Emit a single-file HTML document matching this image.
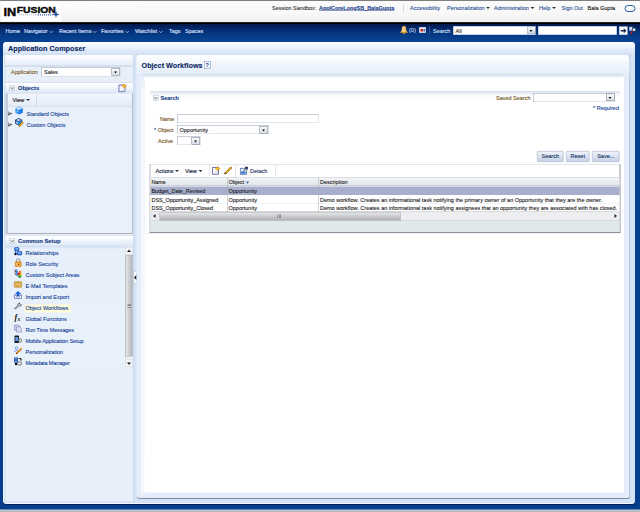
<!DOCTYPE html>
<html>
<head>
<meta charset="utf-8">
<title>Application Composer</title>
<style>
html,body{margin:0;padding:0;width:640px;height:512px;overflow:hidden;background:#053d8c;}
#root{position:absolute;left:0;top:0;width:1280px;height:1024px;transform:scale(0.5);transform-origin:0 0;
  font-family:"Liberation Sans",sans-serif;font-size:11px;color:#222;overflow:hidden;background:#053d8c;}
#root *{box-sizing:border-box;}
.a{position:absolute;white-space:nowrap;}
.t{position:absolute;white-space:nowrap;line-height:14px;height:14px;-webkit-text-stroke:0.2px currentColor;}
/* header */
#hdr{left:0;top:0;width:1280px;height:45px;background:linear-gradient(to bottom,#fbfbfb 0%,#f8f8f8 55%,#f0f0f0 100%);border-top:2px solid #7e7e7e;}
#hdrline{left:0;top:44px;width:1280px;height:4px;background:linear-gradient(to bottom,#777 0%,#000 35%,#000 75%,#02143f 100%);}
#nav{left:0;top:48px;width:1280px;height:36px;background:linear-gradient(to bottom,#02174a 0%,#042b70 30%,#063c88 65%,#094594 100%);}
.hl{color:#2a4f96;}
.nv{color:#c9ddf6;-webkit-text-stroke:0.35px #c9ddf6;}

.dd{display:inline-block;width:0;height:0;border-left:4px solid transparent;border-right:4px solid transparent;border-top:4px solid #333;vertical-align:middle;margin-left:0px;position:relative;top:-1px;}
.chev{display:inline-block;width:5px;height:5px;border-right:1.6px solid #c4dcf6;border-bottom:1.6px solid #c4dcf6;transform:scale(1.15,0.85) rotate(45deg);vertical-align:middle;margin-left:1.5px;position:relative;top:-1px;}
.selbtn{width:17px;height:15px;background:linear-gradient(to bottom,#fdfdfd,#d8dde4);border:1px solid #6f7a88;}
.selbtn:after{content:"";position:absolute;left:4px;top:6px;width:0;height:0;border-left:3.5px solid transparent;border-right:3.5px solid transparent;border-top:4px solid #111;}

#outer{left:6px;top:84px;width:1264px;height:924px;background:#d3e2f6;border-radius:7px;border-left:2px solid #f4f8fd;border-bottom:2px solid #f2f6fc;box-shadow:0 2px 1px #021f55;}
#outerhdr{left:6px;top:84px;width:1264px;height:26px;border-radius:7px 7px 0 0;background:linear-gradient(to bottom,#ffffff 0%,#eef4fc 35%,#cfe0f6 100%);}
#left{left:11px;top:110px;width:255px;height:892px;background:#e8eff9;}
.phdr{background:linear-gradient(to bottom,#ffffff 0%,#f4f8fd 40%,#d9e6f6 100%);border-top:1px solid #c5d2e4;border-bottom:1px solid #b4c2d6;}
.disc{width:11px;height:11px;border:1px solid #b4bece;background:linear-gradient(to bottom,#fff,#dfe5ee);}
.disc:after{content:"";position:absolute;left:2px;top:1px;width:4px;height:4px;border-right:1.5px solid #333;border-bottom:1.5px solid #333;transform:rotate(45deg);}
.tri{width:0;height:0;border-top:4.5px solid transparent;border-bottom:4.5px solid transparent;border-left:9px solid #444;}
.tri:after{content:"";position:absolute;left:-8px;top:-3px;width:0;height:0;border-top:2.5px solid transparent;border-bottom:2.5px solid transparent;border-left:5px solid #e9f0f9;}

#main{left:273px;top:110px;width:988px;height:888px;background:#e4edf9;border-radius:7px;border-right:2px solid #93a2b8;border-bottom:2px solid #7d8a9e;}
#mainhdr{left:273px;top:110px;width:986px;height:38px;border-radius:7px 7px 0 0;background:linear-gradient(to bottom,#ffffff 0%,#f3f7fc 40%,#e4edf9 100%);}
#inner{left:282px;top:148px;width:966px;height:837px;background:#fff;border-radius:6px 6px 0 0;}
#innertop{left:282px;top:148px;width:966px;height:9px;border-radius:6px 6px 0 0;background:linear-gradient(to bottom,#cbd8ea 0%,#e6edf7 50%,#ffffff 100%);}
.btn{height:22px;line-height:19px;text-align:center;color:#1a3568;background:linear-gradient(to bottom,#f0f4fa 0%,#dbe4f1 50%,#c3d0e4 100%);border:1px solid #8d9db6;border-radius:2px;-webkit-text-stroke:0.25px #1a3568;}
#tbl{left:299px;top:328px;width:942px;height:138px;background:#fff;border:2px solid #b4bac2;border-top:1px solid #c4cad2;border-right:2px solid #8f959d;border-bottom:2px solid #8f959d;}
</style>
</head>
<body>
<div id="root">
<!-- HEADER -->
<div id="hdr" class="a"></div>
<div id="hdrline" class="a"></div>
<div id="nav" class="a"></div>

<!-- logo -->
<div class="a" style="left:4px;top:4px;width:118px;height:38px;background:#ffffff;"></div>
<svg class="a" style="left:0;top:0;" width="130" height="44" viewBox="0 0 130 44" font-family="Liberation Sans,sans-serif" font-weight="bold" fill="#0a0a0a" stroke="#0a0a0a">
<text x="7" y="31.2" font-size="23.5" textLength="25.5" lengthAdjust="spacingAndGlyphs" stroke-width="0.9">IN</text>
<text x="33.5" y="26.2" font-size="16.5" textLength="78" lengthAdjust="spacingAndGlyphs" stroke-width="0.8">FUSION</text>
<line x1="38" y1="29.5" x2="76" y2="29.5" stroke="#9ab4d8" stroke-width="2" stroke-dasharray="2 2"/>
<line x1="76" y1="29.5" x2="108" y2="29.5" stroke="#3a68b0" stroke-width="2.5" stroke-dasharray="2 2"/>
<path d="M112 20 L113.5 27 L119 29 L113.5 31 L112 36 L110.5 31 L105 29 L110.5 27 Z" fill="#1d4f9c" stroke="none"/>
</svg>
<div class="t" style="left:128px;top:2px;font-size:17.5px;line-height:24px;height:24px;color:#fff;">Fusion Applications</div>
<!-- global links -->
<div class="t" style="left:544px;top:9px;color:#333;">Session Sandbox:</div>
<div class="t" style="left:638px;top:9px;color:#1d3f8a;font-weight:bold;text-decoration:underline;letter-spacing:-0.1px;">ApplCoreLongSB_BalaGupta</div>
<div class="a" style="left:806px;top:9px;width:1px;height:16px;background:#b0b8c4;"></div>
<div class="t hl" style="left:820px;top:9px;">Accessibility</div>
<div class="t hl" style="left:894px;top:9px;">Personalization <span class="dd"></span></div>
<div class="t hl" style="left:988px;top:9px;">Administration <span class="dd"></span></div>
<div class="t hl" style="left:1078px;top:9px;">Help <span class="dd"></span></div>
<div class="t hl" style="left:1123px;top:9px;">Sign Out</div>
<div class="t" style="left:1175px;top:9px;color:#111;">Bala Gupta</div>
<div class="a" style="left:1249px;top:10px;width:22px;height:14px;border:2.5px solid #2f5fb0;border-radius:7px;"></div>
<!-- nav items -->
<div class="t nv" style="left:11px;top:55px;">Home</div>
<div class="t nv" style="left:48px;top:55px;">Navigator <span class="chev"></span></div>
<div class="t nv" style="left:118px;top:55px;">Recent Items <span class="chev"></span></div>
<div class="t nv" style="left:202px;top:55px;">Favorites <span class="chev"></span></div>
<div class="t nv" style="left:270px;top:55px;">Watchlist <span class="chev"></span></div>
<div class="t nv" style="left:338px;top:55px;">Tags</div>
<div class="t nv" style="left:370px;top:55px;">Spaces</div>
<!-- bell -->
<svg class="a" style="left:800px;top:51px;" width="16" height="18" viewBox="0 0 16 18"><path d="M8 1 C4.5 1 4 5 4 8 C4 11 2 12 1 14 L15 14 C14 12 12 11 12 8 C12 5 11.5 1 8 1 Z" fill="#f8c878" stroke="#e8921c" stroke-width="1.200"/><circle cx="8" cy="15.500" r="1.800" fill="#f0a030"/><path d="M6.500 4 C5.800 6 6 9 5.500 11" stroke="#fff0d0" stroke-width="1.500" fill="none"/></svg>
<div class="t" style="left:818px;top:52px;color:#c9ddf6;">(0)</div>
<div class="a" style="left:838px;top:54px;width:14px;height:12px;background:#e8eef6;border:1px solid #9aa8c0;"><div class="a" style="left:2px;top:3px;width:5px;height:5px;background:#d82020;"></div><div class="a" style="left:8px;top:3px;width:3px;height:5px;background:#4a68a8;"></div></div>
<div class="a" style="left:859px;top:52px;width:1px;height:18px;background:#5a7ab0;"></div>
<div class="t" style="left:866px;top:55px;color:#d4e4f8;">Search</div>
<div class="a" style="left:906px;top:52px;width:165px;height:18px;background:#fff;border:1px solid #8aa0c4;"></div>
<div class="t" style="left:911px;top:55px;color:#222;">All</div>
<div class="a selbtn" style="left:1054px;top:53px;background:linear-gradient(to bottom,#f4f7fb,#c8d4e6);border-color:#8a9ab4;"></div>
<div class="a" style="left:1076px;top:52px;width:158px;height:18px;background:#fff;border:1px solid #8aa0c4;"></div>
<div class="a" style="left:1238px;top:53px;width:17px;height:17px;background:#fbfcfe;border:1px solid #8aa0c4;"><svg width="16" height="15" viewBox="0.5 1 16 15" style="position:absolute;left:0;top:0"><path d="M3 7 L9 7 L9 3.5 L14.5 8.5 L9 13.5 L9 10 L3 10 Z" fill="#1a2a4a"/></svg></div>
<svg class="a" style="left:1257px;top:52px;" width="18" height="18" viewBox="0 0 18 18"><rect x="1.500" y="2" width="6" height="7" fill="#dfe8f6" stroke="#8a9ed0" stroke-width="1"/><circle cx="11" cy="7.500" r="3.800" fill="#c4ecf8" stroke="#16223e" stroke-width="1.700"/><path d="M8.500 10.500 L3.500 15.500" stroke="#d81818" stroke-width="2.200"/></svg>

<!-- OUTER PANEL -->
<div id="outer" class="a"></div>
<div id="outerhdr" class="a"></div>
<div class="t" style="left:16px;top:87px;font-size:14.5px;line-height:20px;height:20px;font-weight:bold;color:#08255e;">Application Composer</div>
<!-- LEFT PANEL -->
<div id="left" class="a"></div>
<div class="a" style="left:11px;top:110px;width:255px;height:23px;background:linear-gradient(to bottom,#ffffff 0%,#f3f7fc 40%,#e4edf9 100%);border-bottom:2px solid #c3d1e4;"></div>
<div class="t" style="left:22px;top:137px;color:#7d5c18;">Application</div>
<div class="a" style="left:82px;top:135px;width:159px;height:18px;background:#fff;border:1px solid;border-color:#8e9bb2 #c3cbd8 #c3cbd8 #8e9bb2;"></div>
<div class="t" style="left:88px;top:137px;color:#222;">Sales</div>
<div class="a selbtn" style="left:223px;top:136px;"></div>
<!-- Objects header -->
<div class="a phdr" style="left:11px;top:165px;width:255px;height:22px;"></div>
<div class="a disc" style="left:19px;top:170px;"></div>
<div class="t" style="left:36px;top:168px;font-size:11.5px;font-weight:bold;color:#0f347a;">Objects</div>
<svg class="a" style="left:236px;top:167px;" width="18" height="18" viewBox="0 0 18 18"><path d="M1.800 3 L14 3 L14 16.500 L1.800 16.500 Z" fill="#f6f7fb" stroke="#5a5c9c" stroke-width="1.700"/><path d="M5 15 L13 7 L13 15 Z" fill="#dde2ee"/><path d="M12.500 0.500 L14.200 3.300 L17.500 5 L14.200 6.700 L12.500 9.500 L10.800 6.700 L7.500 5 L10.800 3.300 Z" fill="#f9c412" stroke="#e07a10" stroke-width="0.900"/></svg>
<!-- view toolbar -->
<div class="a" style="left:9px;top:187px;width:4px;height:282px;background:#cddbf1;"></div>
<div class="a" style="left:13px;top:187px;width:253px;height:26px;background:linear-gradient(to bottom,#f3f7fc,#e2ebf7);border-left:2px solid #a4acb6;border-right:2px solid #b4bcc6;border-bottom:1px solid #a9b2bd;"></div>
<div class="t" style="left:25px;top:193px;color:#1a1a1a;-webkit-text-stroke:0.3px #222;">View <span class="dd"></span></div>
<div class="a" style="left:72px;top:188px;width:1px;height:24px;background:#b8c6d8;"></div>
<!-- tree -->
<div class="a" style="left:13px;top:213px;width:253px;height:255px;background:#e9f0f9;border-left:2px solid #a4acb6;border-right:2px solid #b4bcc6;border-bottom:2px solid #a9b0b8;"></div>
<div class="a tri" style="left:16px;top:223px;"></div>
<svg class="a" style="left:29px;top:212px;" width="18" height="18" viewBox="0 0 18 18"><path d="M2.500 5 L9.500 2 L16 5 L16 13 L9 16.500 L2.500 13 Z" fill="#2f8ff0" stroke="#2278dc" stroke-width="1"/><path d="M2.500 5 L9.500 2 L16 5 L9 8 Z" fill="#c4e6ff"/><path d="M9 8 L16 5 L16 13 L9 16.500 Z" fill="#1f7fe6"/><path d="M4.500 8 L7.500 9.500 L7.500 13 L4.500 11.500 Z" fill="#9fd0fa"/></svg>
<div class="t" style="left:53px;top:220px;color:#143f98;">Standard Objects</div>
<div class="a tri" style="left:16px;top:245px;"></div>
<svg class="a" style="left:29px;top:235px;" width="19" height="19" viewBox="0 0 19 19"><path d="M2 5 L8 2 L14.500 5 L14.500 12 L8 15 L2 12 Z" fill="#2f7fd8" stroke="#14305e" stroke-width="1.400"/><path d="M2 5 L8 2 L14.500 5 L8 8 Z" fill="#bfe0ff" stroke="#14305e" stroke-width="1"/><path d="M4 8.500 L6.500 9.700 L6.500 12.500 L4 11.300 Z" fill="#fff"/><path d="M8.500 16.500 L15.500 8.500 L18 10.500 L11 18 Z" fill="#f4c020" stroke="#8a5a08" stroke-width="0.900"/><path d="M8.500 16.500 L9.200 18.300 L11 18 Z" fill="#222"/></svg>
<div class="t" style="left:53px;top:242px;color:#143f98;">Custom Objects</div>
<!-- Common setup header -->
<div class="a phdr" style="left:11px;top:470px;width:255px;height:23px;"></div>
<div class="a disc" style="left:19px;top:476px;"></div>
<div class="t" style="left:36px;top:474px;font-size:11.5px;font-weight:bold;color:#0f347a;">Common Setup</div>
<!-- list -->
<div class="a" style="left:12px;top:493px;width:254px;height:241px;background:linear-gradient(to bottom,#d6e4f6 0,#e7effa 6px,#e9f1fb 100%);"></div>
<div class="a" style="left:49px;top:609px;width:93px;height:16px;background:#fdfbd8;"></div>
<div class="t" style="left:51px;top:499px;color:#143f98;">Relationships</div>
<div class="t" style="left:51px;top:521px;color:#143f98;">Role Security</div>
<div class="t" style="left:51px;top:543px;color:#143f98;letter-spacing:-0.05px;">Custom Subject Areas</div>
<div class="t" style="left:51px;top:565px;color:#143f98;">E-Mail Templates</div>
<div class="t" style="left:51px;top:587px;color:#143f98;">Import and Export</div>
<div class="t" style="left:51px;top:609px;color:#143f98;">Object Workflows</div>
<div class="t" style="left:51px;top:631px;color:#143f98;">Global Functions</div>
<div class="t" style="left:51px;top:653px;color:#143f98;letter-spacing:-0.2px;">Run Time Messages</div>
<div class="t" style="left:51px;top:675px;color:#143f98;letter-spacing:-0.2px;">Mobile Application Setup</div>
<div class="t" style="left:51px;top:697px;color:#143f98;">Personalization</div>
<div class="t" style="left:51px;top:719px;color:#143f98;letter-spacing:-0.25px;">Metadata Manager</div>

<svg class="a" style="left:27px;top:494px;" width="18" height="18" viewBox="0 0 18 18"><rect x="2" y="1" width="9" height="7" rx="2" fill="#2a6fd8" stroke="#0a3fa8" stroke-width="1"/><rect x="4" y="3" width="5" height="2" fill="#bfe0ff"/><rect x="7" y="9" width="10" height="7" rx="2" fill="#2a6fd8" stroke="#0a3fa8" stroke-width="1"/><rect x="9" y="11" width="6" height="2" fill="#bfe0ff"/><circle cx="4" cy="14" r="2.5" fill="#111"/><path d="M4 8 V12" stroke="#2a6fd8" stroke-width="2"/></svg>
<svg class="a" style="left:27px;top:516px;" width="18" height="18" viewBox="0 0 18 18"><path d="M6 8 V5 a3.5 3.5 0 0 1 7 0 V8" fill="none" stroke="#9aa0a8" stroke-width="2.2"/><rect x="3.5" y="7.500" width="12" height="10" rx="1.500" fill="#f09a18" stroke="#c87408" stroke-width="1"/><rect x="6" y="10" width="6" height="5" fill="#ffd890"/><rect x="8.500" y="11" width="2.500" height="3" fill="#5a3a08"/></svg>
<svg class="a" style="left:27px;top:538px;" width="18" height="18" viewBox="0 0 18 18"><path d="M2 2 H7 M2 5 H7 M2 8 H7 M3 11 H7" stroke="#333" stroke-width="1.600"/><path d="M6 1 C10 3 10 12 7 16 C5 12 5 5 6 1 Z" fill="#3a8ae8"/><circle cx="13" cy="6" r="2.500" fill="#e87818"/><circle cx="11" cy="10" r="3" fill="#e82818"/><circle cx="15" cy="11" r="2.500" fill="#f8d020"/><circle cx="12.500" cy="15" r="3" fill="#28a828"/></svg>
<svg class="a" style="left:27px;top:560px;" width="18" height="18" viewBox="0 0 18 18"><rect x="1.500" y="3.500" width="15" height="11" rx="1" fill="#d8a848" stroke="#b07820" stroke-width="1.200"/><path d="M2 4 L9 10 L16 4 M2 14 L7 9 M16 14 L11 9" stroke="#f4dca0" stroke-width="1.200" fill="none"/></svg>
<svg class="a" style="left:27px;top:582px;" width="18" height="18" viewBox="0 0 18 18"><path d="M2 8 L5 5 H13 L16 8 V15 H2 Z" fill="#f2f5fb" stroke="#5a6ab0" stroke-width="1.400"/><path d="M2 9 H6 V12 H12 V9 H16" fill="none" stroke="#5a6ab0" stroke-width="1.200"/><path d="M9 0.500 L14 5.500 H11 V10 H7 V5.500 H4 Z" fill="#1a6ae8" stroke="#0a3fb0" stroke-width="0.800"/></svg>
<svg class="a" style="left:27px;top:604px;" width="18" height="18" viewBox="0 0 18 18"><path d="M2 15 L3.500 16.500 L10 10 C12 11 15 10 16 7 L13 9 L11 7 L13 4 C10 4 8 6 9 9 Z" transform="translate(0,-2)" fill="#f4f4f4" stroke="#333" stroke-width="1.300"/></svg>
<svg class="a" style="left:27px;top:626px;" width="18" height="18" viewBox="0 0 18 18"><text x="2" y="14" font-family="Liberation Serif,serif" font-style="italic" font-weight="bold" font-size="16" fill="#111">f</text><text x="8" y="16" font-family="Liberation Serif,serif" font-style="italic" font-weight="bold" font-size="11" fill="#111">x</text></svg>
<svg class="a" style="left:27px;top:648px;" width="18" height="18" viewBox="0 0 18 18"><path d="M2 2 H10 L13 5 V13 H2 Z" fill="#c8cce8" stroke="#8a8ec0" stroke-width="1.200"/><path d="M6 6 H13 L16 9 V16 H6 Z" fill="#d8dcf0" stroke="#8a8ec0" stroke-width="1.200"/></svg>
<svg class="a" style="left:27px;top:670px;" width="18" height="18" viewBox="0 0 18 18"><rect x="2" y="1" width="9" height="15" rx="1.500" fill="#1a1a1a"/><rect x="3.500" y="4" width="6" height="8" fill="#5a9ae8"/><circle cx="13" cy="11" r="3.500" fill="#e8ecf4" stroke="#333" stroke-width="1.200"/><path d="M8 14 L12 10" stroke="#333" stroke-width="1.500"/></svg>
<svg class="a" style="left:27px;top:692px;" width="18" height="18" viewBox="0 0 18 18"><circle cx="6" cy="4" r="2.500" fill="#e8f0ff" stroke="#3a7ae0" stroke-width="1.300"/><path d="M2 12 C2 8 10 8 10 12" fill="none" stroke="#3a7ae0" stroke-width="1.500"/><path d="M5 16 L6 13 L15 4 L17 6 L8 15 Z" fill="#f08a18" stroke="#c05a08" stroke-width="0.800"/><path d="M5 16 L6 13 L8 15 Z" fill="#4a2a0a"/></svg>
<svg class="a" style="left:27px;top:714px;" width="18" height="18" viewBox="0 0 18 18"><rect x="1" y="1" width="8" height="10" fill="#1a4aa8"/><path d="M2 3 H8 M2 6 H8 M2 9 H8" stroke="#8ac0ff" stroke-width="1.200"/><path d="M10 3 H15 V6" fill="none" stroke="#111" stroke-width="1.600"/><path d="M13 5 L15 8 L17 5 Z" fill="#111"/><ellipse cx="12" cy="13" rx="4.500" ry="3.500" fill="#e4e8f0" stroke="#333" stroke-width="1.200"/><circle cx="5" cy="14" r="2.500" fill="#111"/></svg>
<!-- v scrollbar -->
<div class="a" style="left:250px;top:493px;width:16px;height:241px;background:#f0f2f4;border-left:1px solid #c8ccd2;"></div>
<div class="a" style="left:250px;top:494px;width:16px;height:15px;background:#f4f5f7;border:1px solid #d0d4da;"></div>
<div class="a" style="left:254px;top:499px;width:0;height:0;border-left:4px solid transparent;border-right:4px solid transparent;border-bottom:5px solid #222;"></div>
<div class="a" style="left:251px;top:510px;width:15px;height:203px;background:linear-gradient(to right,#e6e7e9,#c4c6ca 60%,#b4b6ba);border:1px solid #a2a6ac;"></div>
<div class="a" style="left:255px;top:608px;width:7px;height:7px;border-top:1px solid #555;border-bottom:1px solid #555;"><div class="a" style="left:0;top:2px;width:7px;height:1px;background:#555;"></div></div>
<div class="a" style="left:250px;top:719px;width:16px;height:15px;background:#f4f5f7;border:1px solid #d0d4da;"></div>
<div class="a" style="left:254px;top:725px;width:0;height:0;border-left:4px solid transparent;border-right:4px solid transparent;border-top:5px solid #222;"></div>
<!-- splitter -->
<div class="a" style="left:266px;top:110px;width:8px;height:892px;background:linear-gradient(to right,#c6d7ef 0%,#d4e2f5 40%,#d8e5f7 100%);"></div>
<div class="a" style="left:267px;top:543px;width:7px;height:24px;background:#f4f7fb;border:1px solid #a8b6cc;"></div>
<div class="a" style="left:268px;top:550px;width:0;height:0;border-top:5px solid transparent;border-bottom:5px solid transparent;border-right:5px solid #111;"></div>

<!-- MAIN PANEL -->
<div id="main" class="a"></div>
<div id="mainhdr" class="a"></div>
<div class="t" style="left:283px;top:120px;font-size:14.5px;line-height:20px;height:20px;font-weight:bold;color:#08255e;">Object Workflows</div>
<div class="a" style="left:408px;top:122px;width:13px;height:16px;border:1px solid #7a8cb0;background:#f2f6fc;color:#1a3a8a;font-size:11px;font-weight:bold;line-height:14px;text-align:center;">?</div>
<div id="inner" class="a"></div>
<div id="innertop" class="a"></div>
<div class="a" style="left:289px;top:157px;width:952px;height:310px;border-left:1px solid #e6ebf2;border-bottom:1px solid #dfe4ea;"></div>
<div class="a" style="left:282px;top:152px;width:7px;height:833px;background:linear-gradient(to bottom,#e6eef8 0,#f3f7fc 30px,#f4f8fc 100%);"></div>
<!-- search header -->
<div class="a" style="left:299px;top:182px;width:941px;height:24px;border-top:1px solid #c2ccda;border-radius:6px 6px 0 0;background:linear-gradient(to bottom,#dfe6ef 0%,#f3f6fa 25%,#ffffff 55%);"></div>
<div class="a disc" style="left:306px;top:190px;"></div>
<div class="t" style="left:321px;top:188px;font-weight:bold;color:#103a86;">Search</div>
<div class="t" style="left:992px;top:188px;color:#6f4f12;">Saved Search</div>
<div class="a" style="left:1066px;top:186px;width:164px;height:18px;background:#fff;border:1px solid;border-color:#8e9bb2 #c3cbd8 #c3cbd8 #8e9bb2;"></div>
<div class="a selbtn" style="left:1212px;top:187px;"></div>
<div class="t" style="left:1186px;top:208px;color:#143f98;">* Required</div>
<!-- fields -->
<div class="t" style="left:320px;top:230px;color:#6f4f12;letter-spacing:-0.3px;">Name</div>
<div class="a" style="left:354px;top:229px;width:283px;height:17px;background:#fff;border:1px solid;border-color:#8e9bb2 #c3cbd8 #c3cbd8 #8e9bb2;"></div>
<div class="t" style="left:308px;top:252px;color:#6f4f12;"><span style="color:#143f98">*</span> Object</div>
<div class="a" style="left:354px;top:251px;width:183px;height:17px;background:#fff;border:1px solid;border-color:#8e9bb2 #c3cbd8 #c3cbd8 #8e9bb2;"></div>
<div class="t" style="left:359px;top:252px;color:#222;">Opportunity</div>
<div class="a selbtn" style="left:519px;top:252px;"></div>
<div class="t" style="left:316px;top:274px;color:#6f4f12;">Active</div>
<div class="a" style="left:354px;top:273px;width:47px;height:17px;background:#fff;border:1px solid;border-color:#8e9bb2 #c3cbd8 #c3cbd8 #8e9bb2;"></div>
<div class="a selbtn" style="left:383px;top:274px;"></div>
<!-- buttons -->
<div class="a btn" style="left:1074px;top:302px;width:53px;">Search</div>
<div class="a btn" style="left:1132px;top:302px;width:47px;">Reset</div>
<div class="a btn" style="left:1184px;top:302px;width:55px;">Save...</div>
<!-- table -->
<div id="tbl" class="a"></div>
<div class="t" style="left:311px;top:335px;color:#14233f;-webkit-text-stroke:0.3px #14233f;">Actions <span class="dd"></span></div>
<div class="t" style="left:370px;top:335px;color:#14233f;-webkit-text-stroke:0.3px #14233f;">View <span class="dd"></span></div>
<div class="a" style="left:419px;top:330px;width:1px;height:24px;background:#c0cbdc;"></div>
<svg class="a" style="left:423px;top:332px;" width="18" height="18" viewBox="0 0 18 18"><path d="M1.800 3 L14 3 L14 16.500 L1.800 16.500 Z" fill="#f6f7fb" stroke="#5a5c9c" stroke-width="1.700"/><path d="M5 15 L13 7 L13 15 Z" fill="#dde2ee"/><path d="M12.500 0.500 L14.200 3.300 L17.500 5 L14.200 6.700 L12.500 9.500 L10.800 6.700 L7.500 5 L10.800 3.300 Z" fill="#f9c412" stroke="#e07a10" stroke-width="0.900"/></svg>
<svg class="a" style="left:447px;top:332px;" width="20" height="18" viewBox="0 0 20 18"><path d="M2 16 L3.500 12.500 L14.500 1.500 L17 4 L6 14.800 Z" fill="#f6c022" stroke="#6a3c0c" stroke-width="1.100"/><path d="M2 16 L3.500 12.500 L6 14.800 Z" fill="#2a1a0a"/></svg>
<div class="a" style="left:470px;top:330px;width:1px;height:24px;background:#c0cbdc;"></div>
<svg class="a" style="left:479px;top:332px;" width="18" height="18" viewBox="0 0 18 18"><rect x="1.500" y="4.500" width="12.500" height="12" fill="#f2f6fc" stroke="#3a5a98" stroke-width="1.400"/><rect x="3" y="11" width="9.500" height="4.500" fill="#3f7fd8"/><path d="M7 11 L15 2.500" stroke="#14233f" stroke-width="2"/><path d="M10 1.500 L16.500 1.500 L16.500 8 Z" fill="#14233f"/></svg>
<div class="t" style="left:500px;top:335px;color:#1a3060;">Detach</div>
<div class="a" style="left:551px;top:330px;width:1px;height:24px;background:#c0cbdc;"></div>
<!-- col header -->
<div class="a" style="left:301px;top:355px;width:938px;height:17px;background:linear-gradient(to bottom,#f2f4f6,#e2e6ea);border-top:1px solid #b8c0c8;border-bottom:1px solid #a8b0b8;"></div>
<div class="t" style="left:303px;top:357px;color:#222;letter-spacing:-0.3px;">Name</div>
<div class="t" style="left:457px;top:357px;color:#222;">Object <span style="display:inline-block;width:0;height:0;border-left:3px solid transparent;border-right:3px solid transparent;border-top:5px solid #3a6ab8;position:relative;top:0px;"></span></div>
<div class="t" style="left:640px;top:357px;color:#222;">Description</div>
<!-- rows -->
<div class="a" style="left:301px;top:373px;width:938px;height:17px;background:#a7afcc;"></div>
<div class="a" style="left:301px;top:390px;width:938px;height:17px;background:#fff;border-bottom:1px solid #c4c8ce;"></div>
<div class="a" style="left:301px;top:407px;width:938px;height:17px;background:#fff;border-bottom:1px solid #b0b4ba;"></div>
<div class="a" style="left:454px;top:355px;width:1px;height:69px;background:#a4aab2;"></div>
<div class="a" style="left:636px;top:355px;width:1px;height:69px;background:#a4aab2;"></div>
<div class="t" style="left:303px;top:375px;letter-spacing:-0.14px;">Budget_Date_Revised</div>
<div class="t" style="left:457px;top:375px;">Opportunity</div>
<div class="t" style="left:303px;top:392px;letter-spacing:-0.14px;">DSS_Opportunity_Assigned</div>
<div class="t" style="left:457px;top:392px;">Opportunity</div>
<div class="t" style="left:640px;top:392px;">Demo workflow. Creates an informational task notifying the primary owner of an Opportunity that they are the owner.</div>
<div class="t" style="left:303px;top:409px;letter-spacing:-0.14px;">DSS_Opportunity_Closed</div>
<div class="t" style="left:457px;top:409px;">Opportunity</div>
<div class="t" style="left:640px;top:409px;">Demo workflow. Creates an informational task notifying assignees that an opportunity they are associated with has closed.</div>
<!-- h scrollbar -->
<div class="a" style="left:301px;top:424px;width:938px;height:18px;background:#eceef0;border-bottom:1px solid #c0c4ca;"></div>
<div class="a" style="left:306px;top:428px;width:0;height:0;border-top:4px solid transparent;border-bottom:4px solid transparent;border-right:5px solid #222;"></div>
<div class="a" style="left:319px;top:425px;width:483px;height:16px;background:linear-gradient(to bottom,#e4e5e7,#c2c4c8 60%,#b2b4b8);border:1px solid #a2a6ac;"></div>
<div class="a" style="left:555px;top:429px;width:7px;height:7px;border-left:1px solid #555;border-right:1px solid #555;"><div class="a" style="left:2px;top:0;width:1px;height:7px;background:#555;"></div></div>
<div class="a" style="left:1229px;top:428px;width:0;height:0;border-top:4px solid transparent;border-bottom:4px solid transparent;border-left:5px solid #222;"></div>
<!-- status -->
<div class="a" style="left:301px;top:442px;width:938px;height:22px;background:#e1e8ea;"></div>
<!-- footer strip -->
<div class="a" style="left:0;top:1019px;width:1280px;height:5px;background:linear-gradient(to bottom,#c9d0d8,#aab2bc);"></div>
</div>
</body>
</html>
